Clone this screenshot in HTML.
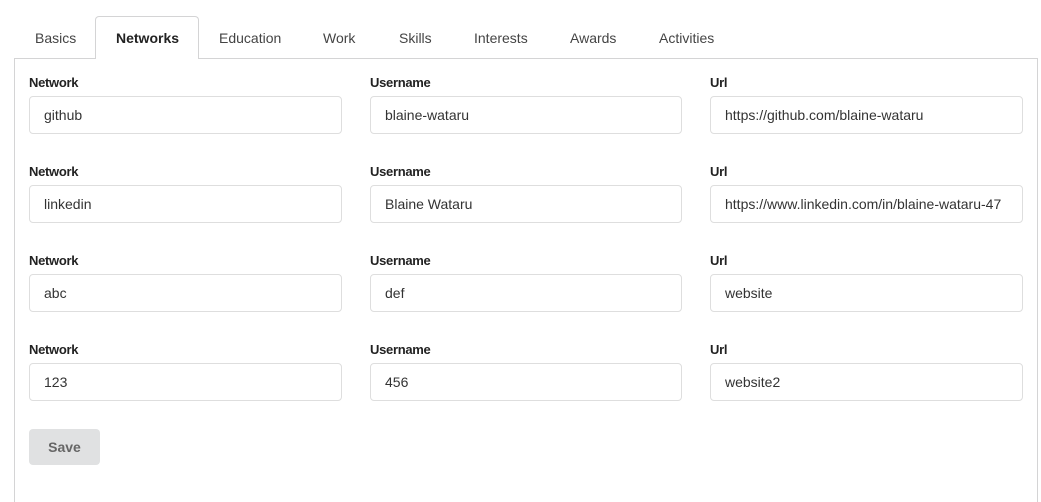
<!DOCTYPE html>
<html><head><meta charset="utf-8"><style>
*{box-sizing:border-box;margin:0;padding:0}
html,body{width:1041px;height:502px;overflow:hidden}
body{background:#fff;font-family:"Liberation Sans",sans-serif;position:relative;color:#333}
.tab{position:absolute;top:30px;font-size:14px;color:#444;line-height:16px}
.active{position:absolute;left:95px;top:16px;width:104px;height:43px;border:1px solid #d4d4d5;border-bottom:none;border-radius:4px 4px 0 0;background:#fff;z-index:2}
.panel{position:absolute;left:14px;top:58px;width:1024px;height:444px;border:1px solid #d4d4d5;border-bottom:none}
.lbl{position:absolute;font-size:13px;font-weight:bold;color:#222;letter-spacing:-0.3px}
.inp{position:absolute;height:38px;border:1px solid #dedede;border-radius:4px;font-size:14px;color:#333;padding:0 14px;line-height:36px;white-space:nowrap;overflow:hidden}
.btn{position:absolute;left:29px;top:429px;width:71px;height:36px;background:#e0e1e2;border-radius:4px;font-size:14px;font-weight:bold;color:#666;text-align:center;line-height:36px}
</style></head><body>
<div class="panel"></div>
<div class="active"></div>
<div class="tab" style="left:35px">Basics</div>
<div class="tab" style="left:116px;font-weight:bold;color:#222;z-index:3">Networks</div>
<div class="tab" style="left:219px">Education</div>
<div class="tab" style="left:323px">Work</div>
<div class="tab" style="left:399px">Skills</div>
<div class="tab" style="left:474px">Interests</div>
<div class="tab" style="left:570px">Awards</div>
<div class="tab" style="left:659px">Activities</div>

<div class="lbl" style="left:29px;top:75px">Network</div>
<div class="lbl" style="left:370px;top:75px">Username</div>
<div class="lbl" style="left:710px;top:75px">Url</div>
<div class="inp" style="left:29px;top:96px;width:313px">github</div>
<div class="inp" style="left:370px;top:96px;width:312px">blaine-wataru</div>
<div class="inp" style="left:710px;top:96px;width:313px">https://github.com/blaine-wataru</div>

<div class="lbl" style="left:29px;top:164px">Network</div>
<div class="lbl" style="left:370px;top:164px">Username</div>
<div class="lbl" style="left:710px;top:164px">Url</div>
<div class="inp" style="left:29px;top:185px;width:313px">linkedin</div>
<div class="inp" style="left:370px;top:185px;width:312px">Blaine Wataru</div>
<div class="inp" style="left:710px;top:185px;width:313px">https://www.linkedin.com/in/blaine-wataru-47</div>

<div class="lbl" style="left:29px;top:253px">Network</div>
<div class="lbl" style="left:370px;top:253px">Username</div>
<div class="lbl" style="left:710px;top:253px">Url</div>
<div class="inp" style="left:29px;top:274px;width:313px">abc</div>
<div class="inp" style="left:370px;top:274px;width:312px">def</div>
<div class="inp" style="left:710px;top:274px;width:313px">website</div>

<div class="lbl" style="left:29px;top:342px">Network</div>
<div class="lbl" style="left:370px;top:342px">Username</div>
<div class="lbl" style="left:710px;top:342px">Url</div>
<div class="inp" style="left:29px;top:363px;width:313px">123</div>
<div class="inp" style="left:370px;top:363px;width:312px">456</div>
<div class="inp" style="left:710px;top:363px;width:313px">website2</div>

<div class="btn">Save</div>
</body></html>
